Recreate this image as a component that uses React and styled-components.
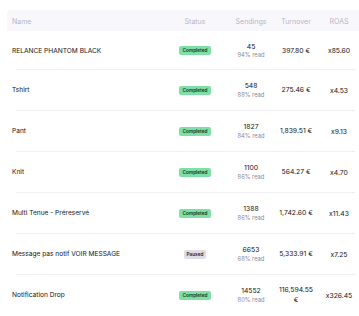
import React from 'react';
import styled, { createGlobalStyle } from 'styled-components';

const Global = createGlobalStyle`
    html, body {
        margin: 0;
        padding: 0;
        background: #ffffff;
        overflow: hidden;
    }
    body {
        font-family: Inter, "Noto Sans", "Liberation Sans", sans-serif;
        color: #1a1a1f;
        -webkit-font-smoothing: antialiased;
    }
`

const Wrapper = styled.div`
    width: 359px;
    height: 316px;
    overflow: hidden;
    padding-top: 10px;
    box-sizing: border-box;
`

const Table = styled.div`
    margin-left: 7px;
    width: 356px;
`

const cols = `165px 53px 52px 38px 48px`

const Head = styled.div`
    display: grid;
    grid-template-columns: ${cols};
    height: 21px;
    padding-top: 1px;
    box-sizing: border-box;
    align-items: center;
    background: #f8f7fb;
    border-radius: 3px 0 0 0;
    font-size: 7px;
    color: #b9b5c8;
`

const HeadCell = styled.div`
    text-align: ${p => (p.left ? 'left' : 'center')};
    padding-left: ${p => (p.left ? '5px' : '0')};
    padding-right: ${p => (p.pad ? '7px' : '0')};
`

const Row = styled.div`
    display: grid;
    grid-template-columns: ${cols};
    align-items: center;
    height: ${p => (p.first ? '38px' : '41px')};
    padding-top: ${p => (p.first ? '1px' : '1px')};
    box-sizing: border-box;
    background: ${p =>
        p.first
            ? '#ffffff'
            : 'linear-gradient(#efeef3, #efeef3) no-repeat 9px 0 / 339px 1px, #ffffff'};
`

const Name = styled.div`
    padding-left: 5px;
    font-size: 6.6px;
    color: #141418;
`

const StatusCell = styled.div`
    display: flex;
    justify-content: center;
    padding-right: 7px;
`

const Badge = styled.span`
    display: inline-block;
    font-size: 4.7px;
    font-weight: 600;
    line-height: 9px;
    height: 9px;
    padding: 0 ${p => (p.paused ? '3px' : '3.5px')};
    border-radius: 2px;
    background: ${p => (p.paused ? '#dddce7' : '#7fe0a7')};
    color: ${p => (p.paused ? '#24242b' : '#10321f')};
`

const Sendings = styled.div`
    display: flex;
    flex-direction: column;
    align-items: center;
    line-height: 1.4;
`

const Count = styled.span`
    font-size: 6.8px;
    color: #141418;
`

const Read = styled.span`
    font-size: 5.8px;
    color: #8c8a95;
`

const Money = styled.div`
    text-align: center;
    font-size: 6.8px;
    line-height: 10px;
    color: #141418;
`

const Roas = styled.div`
    text-align: center;
    font-size: 6.8px;
    color: #141418;
`

const campaigns = [
    { name: 'RELANCE PHANTOM BLACK', status: 'Completed', sent: '45', read: '94%', turnover: '397.80 €', roas: 'x85.60' },
    { name: 'Tshirt', status: 'Completed', sent: '548', read: '88%', turnover: '275.46 €', roas: 'x4.53' },
    { name: 'Pant', status: 'Completed', sent: '1827', read: '84%', turnover: '1,839.51 €', roas: 'x9.13' },
    { name: 'Knit', status: 'Completed', sent: '1100', read: '86%', turnover: '564.27 €', roas: 'x4.70' },
    { name: 'Multi Tenue - Préreservé', status: 'Completed', sent: '1388', read: '86%', turnover: '1,742.60 €', roas: 'x11.43' },
    { name: 'Message pas notif VOIR MESSAGE', status: 'Paused', sent: '6653', read: '68%', turnover: '5,333.91 €', roas: 'x7.25' },
    { name: 'Notification Drop', status: 'Completed', sent: '14552', read: '80%', turnover: '116,594.55 €', roas: 'x326.45' },
]

export default function App() {
    return (
        <Wrapper>
            <Global />
            <Table>
                <Head>
                    <HeadCell left>Name</HeadCell>
                    <HeadCell pad>Status</HeadCell>
                    <HeadCell>Sendings</HeadCell>
                    <HeadCell>Turnover</HeadCell>
                    <HeadCell>ROAS</HeadCell>
                </Head>
                {campaigns.map((c, i) => (
                    <Row key={c.name} first={i === 0}>
                        <Name>{c.name}</Name>
                        <StatusCell>
                            <Badge paused={c.status === 'Paused'}>{c.status}</Badge>
                        </StatusCell>
                        <Sendings>
                            <Count>{c.sent}</Count>
                            <Read>{c.read} read</Read>
                        </Sendings>
                        <Money>{c.turnover}</Money>
                        <Roas>{c.roas}</Roas>
                    </Row>
                ))}
            </Table>
        </Wrapper>
    )
}
